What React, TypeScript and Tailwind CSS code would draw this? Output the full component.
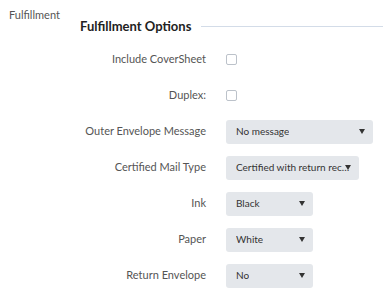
const font = { fontFamily: 'Lato, "Noto Sans", sans-serif' }

type SelectProps = { value: string; width: string }

const Select = ({ value, width }: SelectProps) => (
    <div
        className={`relative flex items-center h-[24px] ${width} rounded-[3px] bg-[#e4e7eb] pl-[10px] pr-[6px] text-[10px] text-[#333]`}
    >
        <span className="truncate">{value}</span>
        <span className="absolute right-[8px] top-[9px] w-0 h-0 border-l-[3px] border-r-[3px] border-t-[5px] border-l-transparent border-r-transparent border-t-[#333]" />
    </div>
)

const Checkbox = () => (
    <div className="w-[11px] h-[11px] rounded-[2px] border border-[#bcc2ca] bg-white" />
)

const Row = ({ label, children }: { label: string; children: React.ReactNode }) => (
    <div className="flex items-center h-[36px]">
        <div className="w-[126px] text-right text-[11px] text-[#555] whitespace-nowrap">{label}</div>
        <div className="ml-[20px] flex items-center">{children}</div>
    </div>
)

export default function App() {
    return (
        <div className="flex w-[390px] h-[291px] bg-white overflow-hidden" style={font}>
            <div className="w-[80px] shrink-0 pl-[9px] pt-[7px] text-[11px] text-[#555]">Fulfillment</div>
            <div className="flex flex-col flex-1 pr-[7px]">
                <div className="flex items-center gap-[10px] h-[22px] mt-[17px]">
                    <h2 className="text-[13px] font-bold text-[#222] whitespace-nowrap">Fulfillment Options</h2>
                    <div className="flex-1 h-px bg-[#d3dce8]" />
                </div>
                <div className="mt-[5px] flex flex-col">
                    <Row label="Include CoverSheet">
                        <Checkbox />
                    </Row>
                    <Row label="Duplex:">
                        <Checkbox />
                    </Row>
                    <Row label="Outer Envelope Message">
                        <Select value="No message" width="w-[147px]" />
                    </Row>
                    <Row label="Certified Mail Type">
                        <Select value="Certified with return receipt" width="w-[133px]" />
                    </Row>
                    <Row label="Ink">
                        <Select value="Black" width="w-[87px]" />
                    </Row>
                    <Row label="Paper">
                        <Select value="White" width="w-[87px]" />
                    </Row>
                    <Row label="Return Envelope">
                        <Select value="No" width="w-[87px]" />
                    </Row>
                </div>
            </div>
        </div>
    )
}
